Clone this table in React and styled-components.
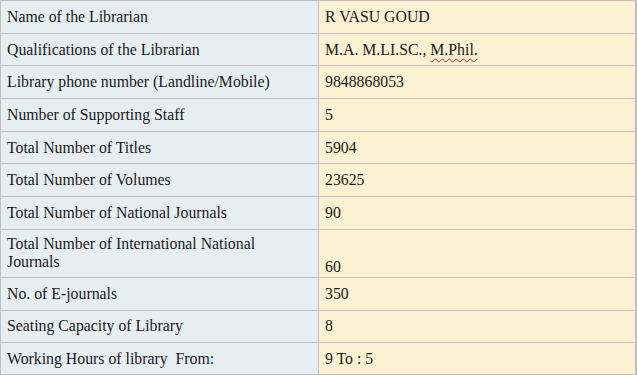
import styled, { createGlobalStyle } from "styled-components";

let Global = createGlobalStyle`
  html, body {
    margin: 0;
    padding: 0;
    background: #fff;
    font-family: "Liberation Serif", "Times New Roman", Times, serif;
  }
`;

let Table = styled.table`
  border-collapse: collapse;
  width: 637px;
  font-size: 15.8px;
  color: #1a1a1a;
  border: 1px solid #c0c0c0;
  border-right-width: 2px;
  border-bottom-width: 2px;
`;

let Row = styled.tr`
  height: ${(p) => (p.$tall ? "48px" : "32.7px")};
`;

let Label = styled.td`
  width: 318px;
  box-sizing: border-box;
  padding: 0 6px;
  font-family: "Liberation Serif", "Times New Roman", Times, serif;
  background-color: #e7eef2;
  border: 1px solid #c0c0c0;
  vertical-align: middle;
  line-height: 18px;
`;

let Value = styled.td`
  padding: ${(p) => (p.$bottom ? "0 6px 1px" : "0 6px")};
  font-family: "Liberation Serif", "Times New Roman", Times, serif;
  background-color: #fdf1d3;
  border: 1px solid #c0c0c0;
  vertical-align: ${(p) => (p.$bottom ? "bottom" : "middle")};
  line-height: 18px;
`;

let Spell = styled.span`
  text-decoration: underline wavy #e02020;
  text-decoration-thickness: 1px;
  text-underline-offset: 3px;
`;

let rows = [
  ["Name of the Librarian", "R VASU GOUD"],
  [
    "Qualifications of the Librarian",
    <>
      M.A. M.LI.SC., <Spell>M.Phil.</Spell>
    </>,
  ],
  ["Library phone number (Landline/Mobile)", "9848868053"],
  ["Number of Supporting Staff", "5"],
  ["Total Number of Titles", "5904"],
  ["Total Number of Volumes", "23625"],
  ["Total Number of National Journals", "90"],
  ["Total Number of International National Journals", "60", true],
  ["No. of E-journals", "350"],
  ["Seating Capacity of Library", "8"],
  ["Working Hours of library\u00a0 From:", "9 To : 5"],
];

function App() {
  return (
    <>
      <Global />
      <Table>
        <tbody>
          {rows.map(([label, value, tall], i) => (
            <Row key={i} $tall={tall}>
              <Label>
                {tall ? (
                  <>
                    Total Number of International National
                    <br />
                    Journals
                  </>
                ) : (
                  label
                )}
              </Label>
              <Value $bottom={tall}>{value}</Value>
            </Row>
          ))}
        </tbody>
      </Table>
    </>
  );
}

export default App;
